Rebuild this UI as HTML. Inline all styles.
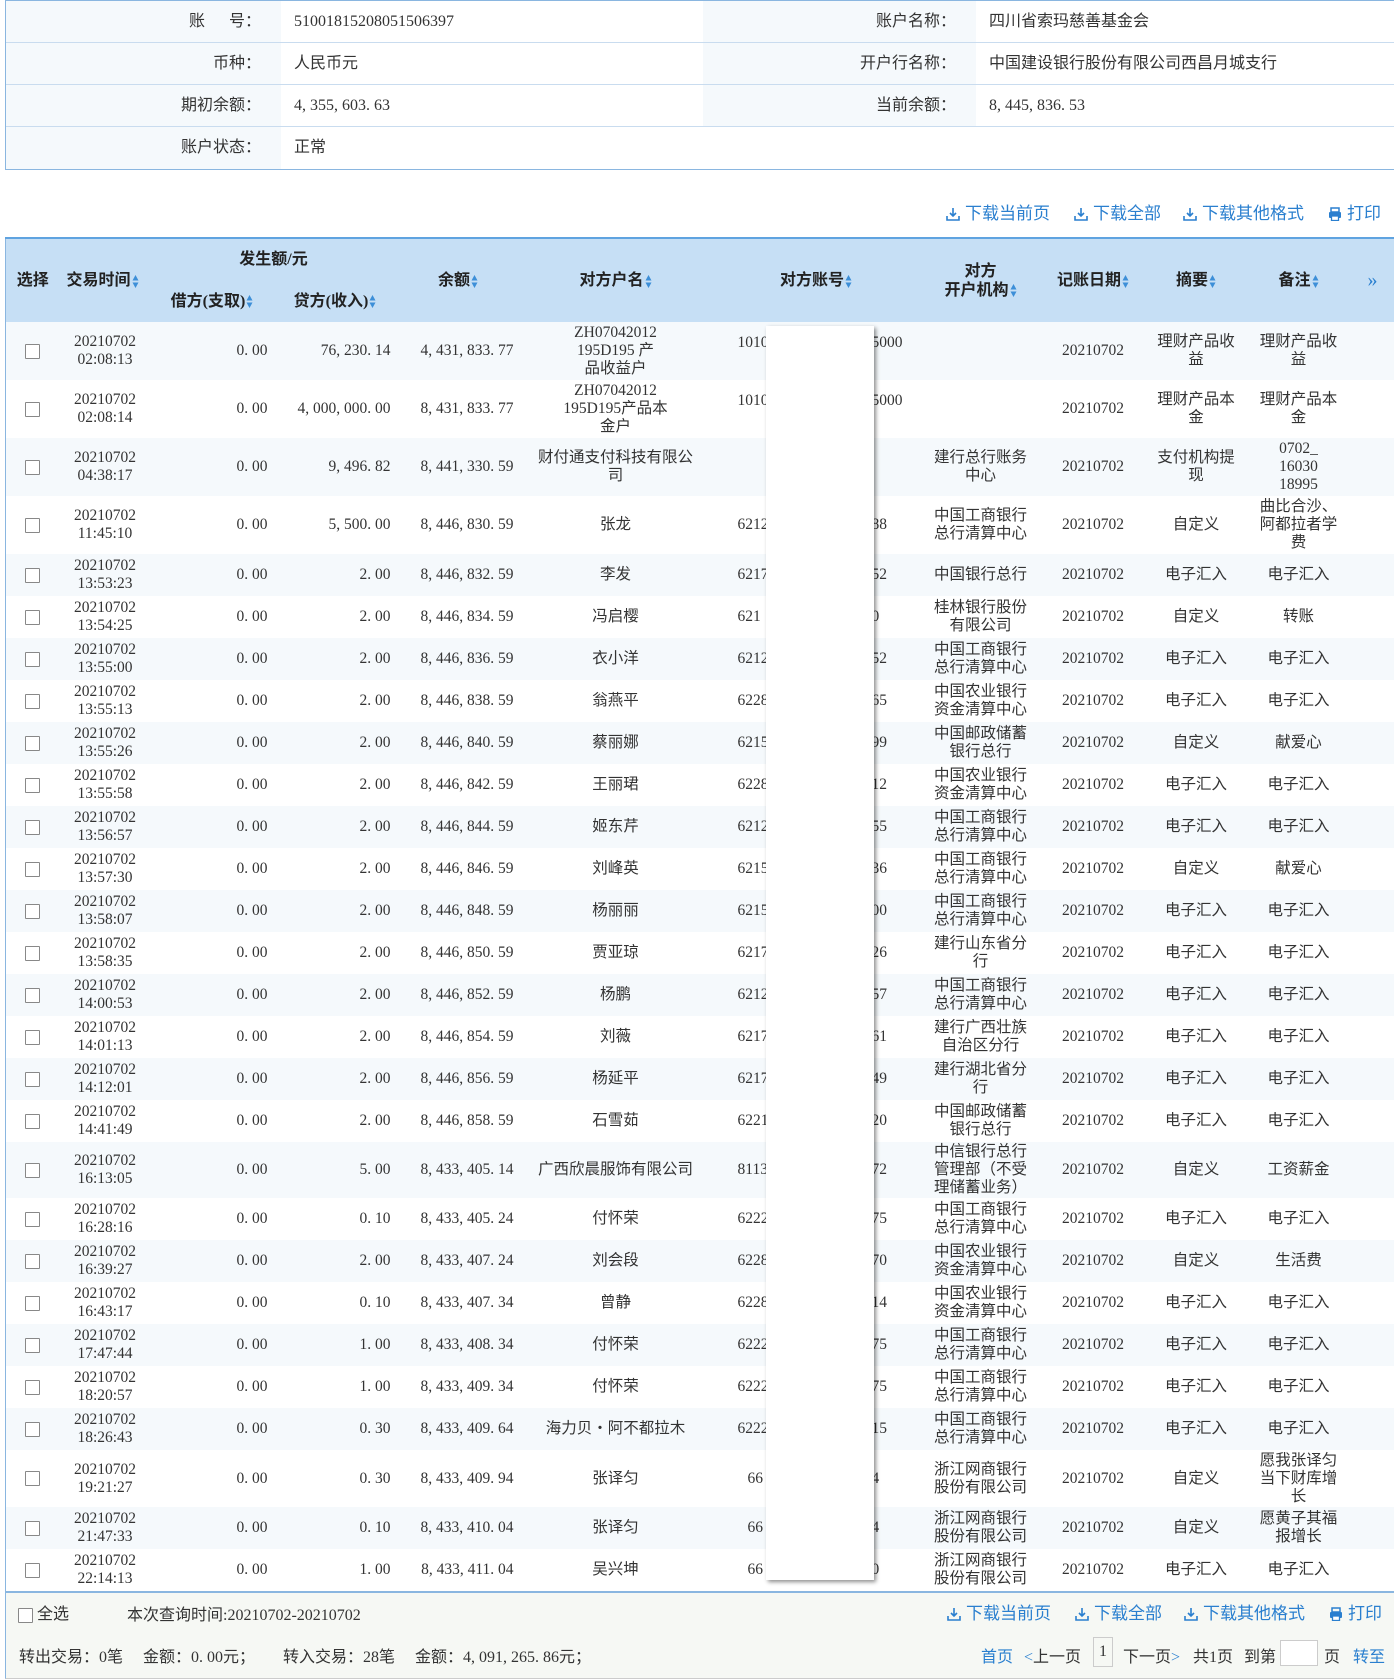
<!DOCTYPE html>
<html><head><meta charset="utf-8">
<style>
*{box-sizing:border-box;margin:0;padding:0}
body{width:1394px;height:1679px;background:#fff;font-family:"Liberation Serif","Noto Sans CJK SC",serif;font-size:16px;color:#333;position:relative;overflow:hidden}
.info{position:absolute;left:5px;top:0;width:1389px;border:1px solid #8ab6e0;border-right:none}
.info .r{height:42px;border-bottom:1px solid #c9dcef;display:flex;align-items:center}
.info .r:last-child{border-bottom:none}
.lb{width:275px;height:100%;background:#f5f9fc;text-align:right;padding-right:20px;line-height:42px}
.vl{width:422px;padding-left:13px;line-height:42px;height:100%}
.lb2{width:273px;height:100%;background:#f5f9fc;text-align:right;padding-right:20px;line-height:42px}
.vl2{padding-left:13px;line-height:42px}
.tb{position:absolute;top:199px;left:0;width:1394px;color:#2a7fcf;font-size:17px}
.tb span{position:absolute;white-space:nowrap}
.ic{display:inline-block;width:14px;height:14px;margin-right:5px;vertical-align:-2px}
table{position:absolute;left:5px;top:237px;width:1389px;border-collapse:collapse;table-layout:fixed;border-left:1px solid #8ab6e0}
thead tr{background:#c6dff5}
thead{border-top:2px solid #5fa3e0}
th{font-weight:bold;font-size:16px;color:#222;line-height:19px}
td{text-align:center;line-height:18px;font-size:15.5px;padding:0 2px;vertical-align:middle}
tbody tr:nth-child(odd){background:#f5f9fc}
td.n{text-align:right;padding-right:6px}
.cb{display:inline-block;width:15px;height:15px;border:1px solid #888;background:#fff;border-radius:1px;vertical-align:middle}
.s{display:inline-block;width:7px;height:17px;vertical-align:middle;margin-left:1px}
.ac{position:relative;height:18px;text-align:left}
.ac span:first-child{position:absolute;left:24px}
.ac span:last-child{position:absolute;left:158px}
.ov{position:absolute;left:766px;top:326px;width:108px;height:1254px;background:#fff;box-shadow:2px 2px 4px rgba(0,0,0,.45)}
.ft{position:absolute;left:5px;top:1591px;width:1389px;height:88px;background:#f6f8f4;border-top:2px solid #8ab6e0;border-left:1px solid #8ab6e0;border-bottom:1px solid #ccc}
.ft span{position:absolute;white-space:nowrap}
.bl{color:#2a7fcf}
</style></head><body>
<div class="info">
<div class="r"><div class="lb">账&nbsp;&nbsp;&nbsp;&nbsp;&nbsp;&nbsp;号：</div><div class="vl">51001815208051506397</div><div class="lb2">账户名称：</div><div class="vl2">四川省索玛慈善基金会</div></div>
<div class="r"><div class="lb">币种：</div><div class="vl">人民币元</div><div class="lb2">开户行名称：</div><div class="vl2">中国建设银行股份有限公司西昌月城支行</div></div>
<div class="r"><div class="lb">期初余额：</div><div class="vl">4, 355, 603. 63</div><div class="lb2">当前余额：</div><div class="vl2">8, 445, 836. 53</div></div>
<div class="r"><div class="lb">账户状态：</div><div class="vl">正常</div></div>
</div>
<svg width="0" height="0" style="position:absolute"><defs>
<symbol id="dl" viewBox="0 0 14 14"><path d="M7 1v8M4 6l3 3 3-3" stroke="#2a7fcf" stroke-width="1.6" fill="none"/><path d="M1 9v4h12V9" stroke="#2a7fcf" stroke-width="1.6" fill="none"/></symbol>
<symbol id="pr" viewBox="0 0 14 14"><rect x="3" y="1" width="8" height="4" fill="none" stroke="#2a7fcf" stroke-width="1.5"/><rect x="1" y="5" width="12" height="6" rx="1" fill="#2a7fcf"/><rect x="3.5" y="9" width="7" height="4.5" fill="#fff" stroke="#2a7fcf" stroke-width="1.3"/></symbol>
<symbol id="so" viewBox="0 0 7 17"><path d="M3.5 2L6.5 7.5H0.5Z" fill="#3d8fd8"/><path d="M3.5 15L6.5 9.5H0.5Z" fill="#3d8fd8"/></symbol>
</defs></svg>
<div class="tb">
<span style="left:946px"><svg class="ic"><use href="#dl"/></svg>下载当前页</span>
<span style="left:1074px"><svg class="ic"><use href="#dl"/></svg>下载全部</span>
<span style="left:1183px"><svg class="ic"><use href="#dl"/></svg>下载其他格式</span>
<span style="left:1328px"><svg class="ic"><use href="#pr"/></svg>打印</span>
</div>
<table>
<colgroup><col style="width:54px"><col style="width:91px"><col style="width:123px"><col style="width:123px"><col style="width:123px"><col style="width:192px"><col style="width:209px"><col style="width:120px"><col style="width:105px"><col style="width:101px"><col style="width:104px"><col style="width:44px"></colgroup>
<thead>
<tr style="height:42px"><th rowspan="2">选择</th><th rowspan="2" style="text-align:left;padding-left:7px">交易时间<svg class="s"><use href="#so"/></svg></th><th colspan="2" style="vertical-align:middle">发生额/元</th><th rowspan="2">余额<svg class="s"><use href="#so"/></svg></th><th rowspan="2">对方户名<svg class="s"><use href="#so"/></svg></th><th rowspan="2">对方账号<svg class="s"><use href="#so"/></svg></th><th rowspan="2">对方<br>开户机构<svg class="s"><use href="#so"/></svg></th><th rowspan="2">记账日期<svg class="s"><use href="#so"/></svg></th><th rowspan="2">摘要<svg class="s"><use href="#so"/></svg></th><th rowspan="2">备注<svg class="s"><use href="#so"/></svg></th><th rowspan="2" style="color:#2a7fcf;font-weight:normal;font-size:20px">»</th></tr>
<tr style="height:42px"><th>借方(支取)<svg class="s"><use href="#so"/></svg></th><th>贷方(收入)<svg class="s"><use href="#so"/></svg></th></tr>
</thead>
<tbody>
<tr style="height:58px"><td><span class="cb"></span></td><td>20210702<br>02:08:13</td><td class="n">0. 00</td><td class="n">76, 230. 14</td><td class="n">4, 431, 833. 77</td><td>ZH07042012<br>195D195 产<br>品收益户</td><td style="vertical-align:top;padding-top:12px"><div class="ac"><span>1010</span><span>5000</span></div></td><td></td><td>20210702</td><td>理财产品收<br>益</td><td>理财产品收<br>益</td><td></td></tr>
<tr style="height:58px"><td><span class="cb"></span></td><td>20210702<br>02:08:14</td><td class="n">0. 00</td><td class="n">4, 000, 000. 00</td><td class="n">8, 431, 833. 77</td><td>ZH07042012<br>195D195产品本<br>金户</td><td style="vertical-align:top;padding-top:12px"><div class="ac"><span>1010</span><span>5000</span></div></td><td></td><td>20210702</td><td>理财产品本<br>金</td><td>理财产品本<br>金</td><td></td></tr>
<tr style="height:58px"><td><span class="cb"></span></td><td>20210702<br>04:38:17</td><td class="n">0. 00</td><td class="n">9, 496. 82</td><td class="n">8, 441, 330. 59</td><td>财付通支付科技有限公<br>司</td><td></td><td>建行总行账务<br>中心</td><td>20210702</td><td>支付机构提<br>现</td><td>0702_<br>16030<br>18995</td><td></td></tr>
<tr style="height:58px"><td><span class="cb"></span></td><td>20210702<br>11:45:10</td><td class="n">0. 00</td><td class="n">5, 500. 00</td><td class="n">8, 446, 830. 59</td><td>张龙</td><td><div class="ac"><span>6212</span><span>88</span></div></td><td>中国工商银行<br>总行清算中心</td><td>20210702</td><td>自定义</td><td>曲比合沙、<br>阿都拉者学<br>费</td><td></td></tr>
<tr style="height:42px"><td><span class="cb"></span></td><td>20210702<br>13:53:23</td><td class="n">0. 00</td><td class="n">2. 00</td><td class="n">8, 446, 832. 59</td><td>李发</td><td><div class="ac"><span>6217</span><span>52</span></div></td><td>中国银行总行</td><td>20210702</td><td>电子汇入</td><td>电子汇入</td><td></td></tr>
<tr style="height:42px"><td><span class="cb"></span></td><td>20210702<br>13:54:25</td><td class="n">0. 00</td><td class="n">2. 00</td><td class="n">8, 446, 834. 59</td><td>冯启樱</td><td><div class="ac"><span>621</span><span>0</span></div></td><td>桂林银行股份<br>有限公司</td><td>20210702</td><td>自定义</td><td>转账</td><td></td></tr>
<tr style="height:42px"><td><span class="cb"></span></td><td>20210702<br>13:55:00</td><td class="n">0. 00</td><td class="n">2. 00</td><td class="n">8, 446, 836. 59</td><td>衣小洋</td><td><div class="ac"><span>6212</span><span>52</span></div></td><td>中国工商银行<br>总行清算中心</td><td>20210702</td><td>电子汇入</td><td>电子汇入</td><td></td></tr>
<tr style="height:42px"><td><span class="cb"></span></td><td>20210702<br>13:55:13</td><td class="n">0. 00</td><td class="n">2. 00</td><td class="n">8, 446, 838. 59</td><td>翁燕平</td><td><div class="ac"><span>6228</span><span>65</span></div></td><td>中国农业银行<br>资金清算中心</td><td>20210702</td><td>电子汇入</td><td>电子汇入</td><td></td></tr>
<tr style="height:42px"><td><span class="cb"></span></td><td>20210702<br>13:55:26</td><td class="n">0. 00</td><td class="n">2. 00</td><td class="n">8, 446, 840. 59</td><td>蔡丽娜</td><td><div class="ac"><span>6215</span><span>99</span></div></td><td>中国邮政储蓄<br>银行总行</td><td>20210702</td><td>自定义</td><td>献爱心</td><td></td></tr>
<tr style="height:42px"><td><span class="cb"></span></td><td>20210702<br>13:55:58</td><td class="n">0. 00</td><td class="n">2. 00</td><td class="n">8, 446, 842. 59</td><td>王丽珺</td><td><div class="ac"><span>6228</span><span>12</span></div></td><td>中国农业银行<br>资金清算中心</td><td>20210702</td><td>电子汇入</td><td>电子汇入</td><td></td></tr>
<tr style="height:42px"><td><span class="cb"></span></td><td>20210702<br>13:56:57</td><td class="n">0. 00</td><td class="n">2. 00</td><td class="n">8, 446, 844. 59</td><td>姬东芹</td><td><div class="ac"><span>6212</span><span>55</span></div></td><td>中国工商银行<br>总行清算中心</td><td>20210702</td><td>电子汇入</td><td>电子汇入</td><td></td></tr>
<tr style="height:42px"><td><span class="cb"></span></td><td>20210702<br>13:57:30</td><td class="n">0. 00</td><td class="n">2. 00</td><td class="n">8, 446, 846. 59</td><td>刘峰英</td><td><div class="ac"><span>6215</span><span>36</span></div></td><td>中国工商银行<br>总行清算中心</td><td>20210702</td><td>自定义</td><td>献爱心</td><td></td></tr>
<tr style="height:42px"><td><span class="cb"></span></td><td>20210702<br>13:58:07</td><td class="n">0. 00</td><td class="n">2. 00</td><td class="n">8, 446, 848. 59</td><td>杨丽丽</td><td><div class="ac"><span>6215</span><span>00</span></div></td><td>中国工商银行<br>总行清算中心</td><td>20210702</td><td>电子汇入</td><td>电子汇入</td><td></td></tr>
<tr style="height:42px"><td><span class="cb"></span></td><td>20210702<br>13:58:35</td><td class="n">0. 00</td><td class="n">2. 00</td><td class="n">8, 446, 850. 59</td><td>贾亚琼</td><td><div class="ac"><span>6217</span><span>26</span></div></td><td>建行山东省分<br>行</td><td>20210702</td><td>电子汇入</td><td>电子汇入</td><td></td></tr>
<tr style="height:42px"><td><span class="cb"></span></td><td>20210702<br>14:00:53</td><td class="n">0. 00</td><td class="n">2. 00</td><td class="n">8, 446, 852. 59</td><td>杨鹏</td><td><div class="ac"><span>6212</span><span>57</span></div></td><td>中国工商银行<br>总行清算中心</td><td>20210702</td><td>电子汇入</td><td>电子汇入</td><td></td></tr>
<tr style="height:42px"><td><span class="cb"></span></td><td>20210702<br>14:01:13</td><td class="n">0. 00</td><td class="n">2. 00</td><td class="n">8, 446, 854. 59</td><td>刘薇</td><td><div class="ac"><span>6217</span><span>61</span></div></td><td>建行广西壮族<br>自治区分行</td><td>20210702</td><td>电子汇入</td><td>电子汇入</td><td></td></tr>
<tr style="height:42px"><td><span class="cb"></span></td><td>20210702<br>14:12:01</td><td class="n">0. 00</td><td class="n">2. 00</td><td class="n">8, 446, 856. 59</td><td>杨延平</td><td><div class="ac"><span>6217</span><span>49</span></div></td><td>建行湖北省分<br>行</td><td>20210702</td><td>电子汇入</td><td>电子汇入</td><td></td></tr>
<tr style="height:42px"><td><span class="cb"></span></td><td>20210702<br>14:41:49</td><td class="n">0. 00</td><td class="n">2. 00</td><td class="n">8, 446, 858. 59</td><td>石雪茹</td><td><div class="ac"><span>6221</span><span>20</span></div></td><td>中国邮政储蓄<br>银行总行</td><td>20210702</td><td>电子汇入</td><td>电子汇入</td><td></td></tr>
<tr style="height:56px"><td><span class="cb"></span></td><td>20210702<br>16:13:05</td><td class="n">0. 00</td><td class="n">5. 00</td><td class="n">8, 433, 405. 14</td><td>广西欣晨服饰有限公司</td><td><div class="ac"><span>8113</span><span>72</span></div></td><td>中信银行总行<br>管理部（不受<br>理储蓄业务）</td><td>20210702</td><td>自定义</td><td>工资薪金</td><td></td></tr>
<tr style="height:42px"><td><span class="cb"></span></td><td>20210702<br>16:28:16</td><td class="n">0. 00</td><td class="n">0. 10</td><td class="n">8, 433, 405. 24</td><td>付怀荣</td><td><div class="ac"><span>6222</span><span>75</span></div></td><td>中国工商银行<br>总行清算中心</td><td>20210702</td><td>电子汇入</td><td>电子汇入</td><td></td></tr>
<tr style="height:42px"><td><span class="cb"></span></td><td>20210702<br>16:39:27</td><td class="n">0. 00</td><td class="n">2. 00</td><td class="n">8, 433, 407. 24</td><td>刘会段</td><td><div class="ac"><span>6228</span><span>70</span></div></td><td>中国农业银行<br>资金清算中心</td><td>20210702</td><td>自定义</td><td>生活费</td><td></td></tr>
<tr style="height:42px"><td><span class="cb"></span></td><td>20210702<br>16:43:17</td><td class="n">0. 00</td><td class="n">0. 10</td><td class="n">8, 433, 407. 34</td><td>曾静</td><td><div class="ac"><span>6228</span><span>14</span></div></td><td>中国农业银行<br>资金清算中心</td><td>20210702</td><td>电子汇入</td><td>电子汇入</td><td></td></tr>
<tr style="height:42px"><td><span class="cb"></span></td><td>20210702<br>17:47:44</td><td class="n">0. 00</td><td class="n">1. 00</td><td class="n">8, 433, 408. 34</td><td>付怀荣</td><td><div class="ac"><span>6222</span><span>75</span></div></td><td>中国工商银行<br>总行清算中心</td><td>20210702</td><td>电子汇入</td><td>电子汇入</td><td></td></tr>
<tr style="height:42px"><td><span class="cb"></span></td><td>20210702<br>18:20:57</td><td class="n">0. 00</td><td class="n">1. 00</td><td class="n">8, 433, 409. 34</td><td>付怀荣</td><td><div class="ac"><span>6222</span><span>75</span></div></td><td>中国工商银行<br>总行清算中心</td><td>20210702</td><td>电子汇入</td><td>电子汇入</td><td></td></tr>
<tr style="height:42px"><td><span class="cb"></span></td><td>20210702<br>18:26:43</td><td class="n">0. 00</td><td class="n">0. 30</td><td class="n">8, 433, 409. 64</td><td>海力贝・阿不都拉木</td><td><div class="ac"><span>6222</span><span>15</span></div></td><td>中国工商银行<br>总行清算中心</td><td>20210702</td><td>电子汇入</td><td>电子汇入</td><td></td></tr>
<tr style="height:57px"><td><span class="cb"></span></td><td>20210702<br>19:21:27</td><td class="n">0. 00</td><td class="n">0. 30</td><td class="n">8, 433, 409. 94</td><td>张译匀</td><td><div class="ac"><span style="left:34px">66</span><span>4</span></div></td><td>浙江网商银行<br>股份有限公司</td><td>20210702</td><td>自定义</td><td>愿我张译匀<br>当下财库增<br>长</td><td></td></tr>
<tr style="height:42px"><td><span class="cb"></span></td><td>20210702<br>21:47:33</td><td class="n">0. 00</td><td class="n">0. 10</td><td class="n">8, 433, 410. 04</td><td>张译匀</td><td><div class="ac"><span style="left:34px">66</span><span>4</span></div></td><td>浙江网商银行<br>股份有限公司</td><td>20210702</td><td>自定义</td><td>愿黄子其福<br>报增长</td><td></td></tr>
<tr style="height:42px"><td><span class="cb"></span></td><td>20210702<br>22:14:13</td><td class="n">0. 00</td><td class="n">1. 00</td><td class="n">8, 433, 411. 04</td><td>吴兴坤</td><td><div class="ac"><span style="left:34px">66</span><span>0</span></div></td><td>浙江网商银行<br>股份有限公司</td><td>20210702</td><td>电子汇入</td><td>电子汇入</td><td></td></tr>
</tbody></table>
<div class="ov"></div>
<div class="ft">
<span style="left:12px;top:7px"><span class="cb" style="position:static"></span> 全选</span>
<span style="left:121px;top:8px">本次查询时间:20210702-20210702</span>
<span class="bl" style="left:941px;top:6px;font-size:17px"><svg class="ic"><use href="#dl"/></svg>下载当前页</span>
<span class="bl" style="left:1069px;top:6px;font-size:17px"><svg class="ic"><use href="#dl"/></svg>下载全部</span>
<span class="bl" style="left:1178px;top:6px;font-size:17px"><svg class="ic"><use href="#dl"/></svg>下载其他格式</span>
<span class="bl" style="left:1323px;top:6px;font-size:17px"><svg class="ic"><use href="#pr"/></svg>打印</span>
<span style="left:13px;top:50px">转出交易：0笔&nbsp;&nbsp;&nbsp;&nbsp;&nbsp;金额：0. 00元；&nbsp;&nbsp;&nbsp;&nbsp;&nbsp;&nbsp;&nbsp;转入交易：28笔&nbsp;&nbsp;&nbsp;&nbsp;&nbsp;金额：4, 091, 265. 86元；</span>
<span class="bl" style="left:975px;top:50px">首页</span>
<span style="left:1018px;top:50px"><span class="bl" style="position:static">&lt;</span>上一页</span>
<span style="left:1087px;top:44px;width:20px;height:30px;border:1px solid #ccc;text-align:center;line-height:28px">1</span>
<span style="left:1117px;top:50px">下一页<span class="bl" style="position:static">&gt;</span></span>
<span style="left:1187px;top:50px">共1页</span>
<span style="left:1238px;top:50px">到第</span>
<span style="left:1274px;top:47px;width:38px;height:26px;border:1px solid #ccc;background:#fff"></span>
<span style="left:1318px;top:50px">页</span>
<span class="bl" style="left:1347px;top:50px">转至</span>
</div>
</body></html>
